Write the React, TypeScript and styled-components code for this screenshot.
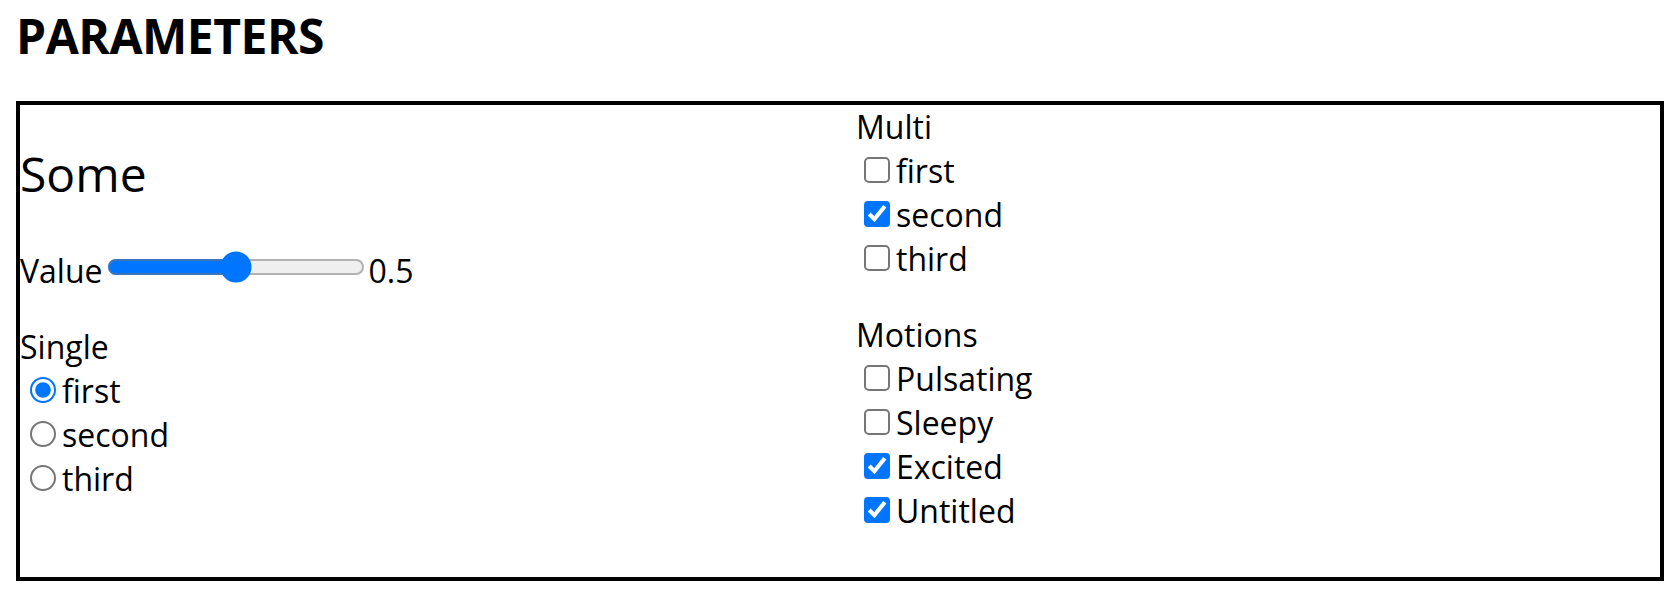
import React from "react"
import styled, { createGlobalStyle } from "styled-components"

const GlobalStyle = createGlobalStyle`
    body {
        margin : 0;
        padding : 0 16px;
        background : #ffffff;
        color : #000000;
        font-family : "Open Sans", "Noto Sans", sans-serif;
        font-size : 32px;
        line-height : 44px;
    }
`

const Title = styled.h1`
    font-size : 48px;
    font-weight : 700;
    line-height : 66px;
    letter-spacing : -0.5px;
    margin : 3px 0 32px 0;
`

const Panel = styled.div`
    border : solid 4px #000000;
    display : grid;
    grid-template-columns : 820px 1fr;
    column-gap : 16px;
    padding-bottom : 44px;
`

const Column = styled.div`
    display : flex;
    flex-direction : column;
`

const SectionTitle = styled.h2`
    font-size : 48px;
    font-weight : 400;
    line-height : 66px;
    margin : 36px 0 42px 0;
`

const SliderRow = styled.div`
    display : flex;
    align-items : flex-start;
    height : 44px;
    margin-bottom : 32px;
`

const Slider = styled.input`
    zoom : 2;
    margin : 1px 2px 0 2px;
    accent-color : #0075ff;
`

const Group = styled.div<{ $last?: boolean }>`
    margin-bottom : ${p => (p.$last ? "0" : "32px")};
`

const GroupLabel = styled.div`
    height : 44px;
`

const Option = styled.label`
    display : block;
    height : 44px;
`

const Check = styled.input`
    zoom : 2;
    accent-color : #0075ff;
`

type Choice = { label: string; checked: boolean }

const multi: Choice[] = [
    { label: "first", checked: false },
    { label: "second", checked: true },
    { label: "third", checked: false },
]

const motions: Choice[] = [
    { label: "Pulsating", checked: false },
    { label: "Sleepy", checked: false },
    { label: "Excited", checked: true },
    { label: "Untitled", checked: true },
]

const single: Choice[] = [
    { label: "first", checked: true },
    { label: "second", checked: false },
    { label: "third", checked: false },
]

function App() {
    return (
        <>
            <GlobalStyle />
            <Title>PARAMETERS</Title>
            <Panel>
                <Column>
                    <SectionTitle>Some</SectionTitle>
                    <SliderRow>
                        <span>Value</span>
                        <Slider type="range" min={0} max={1} step={0.01} defaultValue={0.5} />
                        <span>0.5</span>
                    </SliderRow>
                    <Group $last>
                        <GroupLabel>Single</GroupLabel>
                        {single.map(c => (
                            <Option key={c.label}>
                                <Check type="radio" name="single" defaultChecked={c.checked} />
                                {c.label}
                            </Option>
                        ))}
                    </Group>
                </Column>
                <Column>
                    <Group>
                        <GroupLabel>Multi</GroupLabel>
                        {multi.map(c => (
                            <Option key={c.label}>
                                <Check type="checkbox" defaultChecked={c.checked} />
                                {c.label}
                            </Option>
                        ))}
                    </Group>
                    <Group $last>
                        <GroupLabel>Motions</GroupLabel>
                        {motions.map(c => (
                            <Option key={c.label}>
                                <Check type="checkbox" defaultChecked={c.checked} />
                                {c.label}
                            </Option>
                        ))}
                    </Group>
                </Column>
            </Panel>
        </>
    )
}

export default App
